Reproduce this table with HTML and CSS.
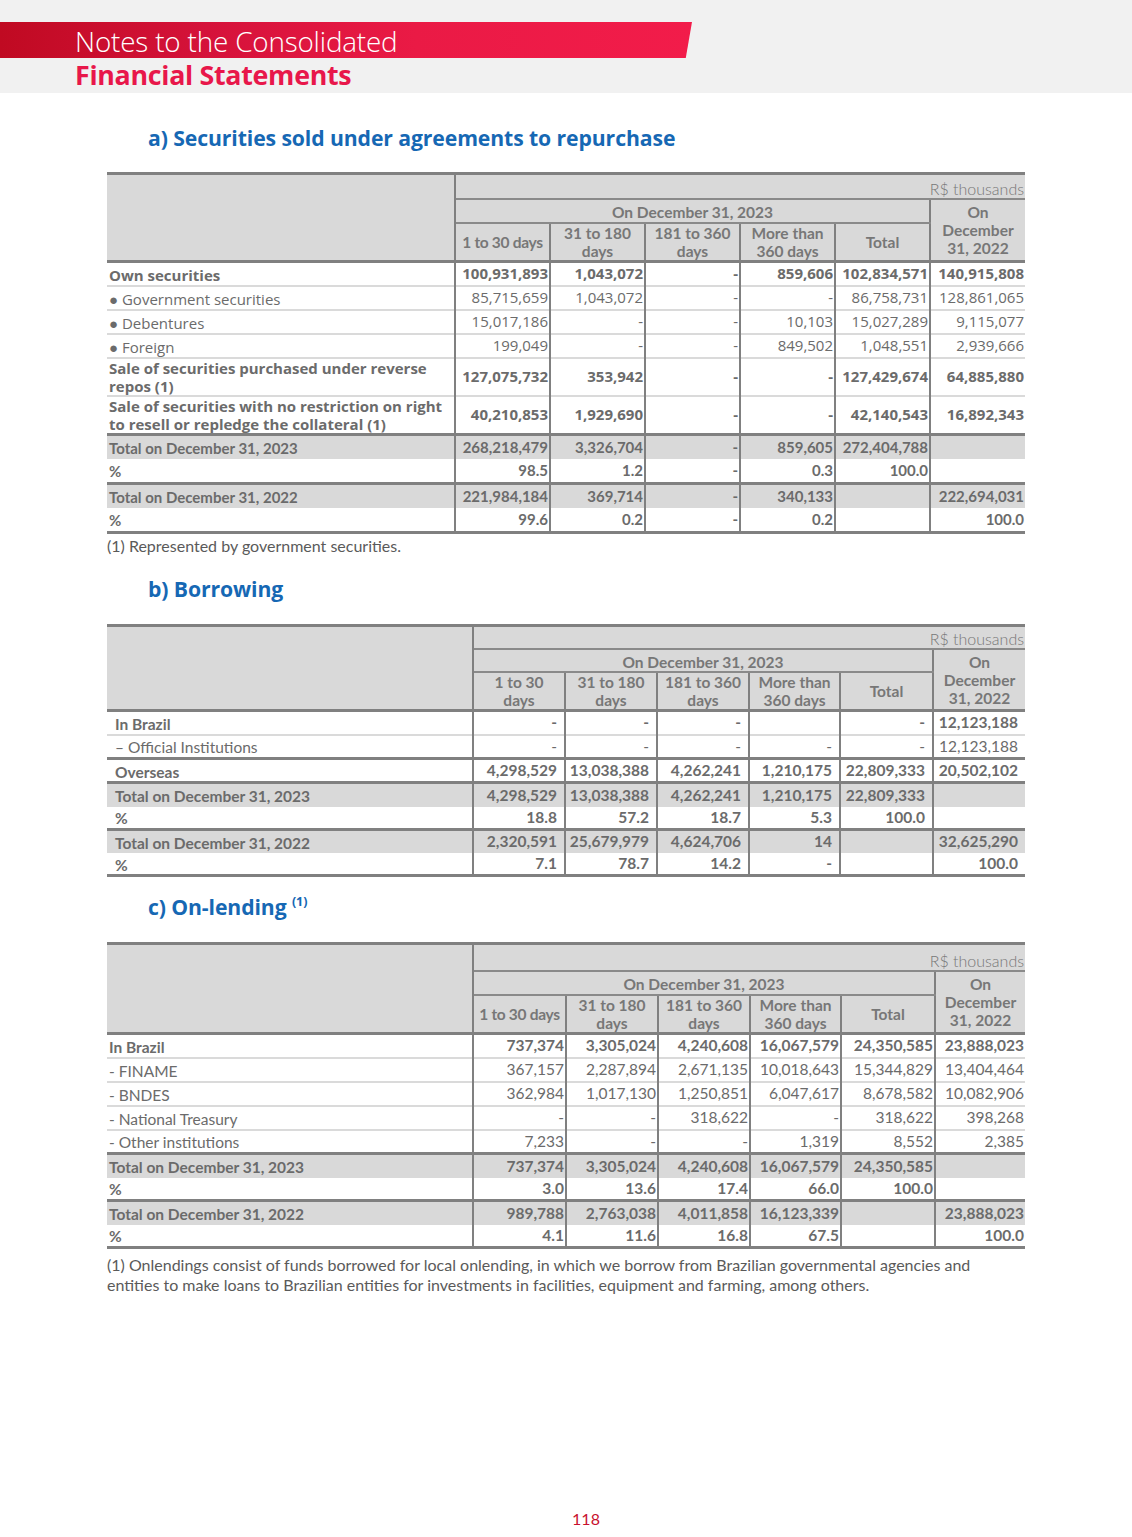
FILE: index.html
```html
<!DOCTYPE html>
<html lang="en">
<head>
<meta charset="utf-8">
<title>Notes to the Consolidated Financial Statements</title>
<link rel="stylesheet" href="styles.css">
</head>
<body>
<div class="page">
  <header class="top">
    <div class="bar"><span class="t1">Notes to the Consolidated</span></div>
    <div class="t2">Financial Statements</div>
  </header>

  <main class="content">
    <h2 class="sec sec-a">a) Securities sold under agreements to repurchase</h2>
    <table class="tbl ta">
      <colgroup><col class="w-label"><col class="w95"><col class="w95"><col class="w95"><col class="w95"><col class="w95"><col class="w95"></colgroup>
      <thead>
        <tr class="h1"><th class="blank" rowspan="3"></th><th class="unit" colspan="6">R$ thousands</th></tr>
        <tr class="h2"><th class="period" colspan="5">On December 31, 2023</th><th class="prev" rowspan="2">On<br>December<br>31, 2022</th></tr>
        <tr class="h3"><th class="tight">1 to 30 days</th><th>31 to 180<br>days</th><th>181 to 360<br>days</th><th>More than<br>360 days</th><th>Total</th></tr>
      </thead>
      <tbody>
        <tr class="b first"><td class="l">Own securities</td><td>100,931,893</td><td>1,043,072</td><td>-</td><td>859,606</td><td>102,834,571</td><td>140,915,808</td></tr>
        <tr><td class="l">● Government securities</td><td>85,715,659</td><td>1,043,072</td><td>-</td><td>-</td><td>86,758,731</td><td>128,861,065</td></tr>
        <tr><td class="l">● Debentures</td><td>15,017,186</td><td>-</td><td>-</td><td>10,103</td><td>15,027,289</td><td>9,115,077</td></tr>
        <tr><td class="l">● Foreign</td><td>199,049</td><td>-</td><td>-</td><td>849,502</td><td>1,048,551</td><td>2,939,666</td></tr>
        <tr class="b two"><td class="l">Sale of securities purchased under reverse repos (1)</td><td>127,075,732</td><td>353,942</td><td>-</td><td>-</td><td>127,429,674</td><td>64,885,880</td></tr>
        <tr class="b two"><td class="l">Sale of securities with no restriction on right to resell or repledge the collateral (1)</td><td>40,210,853</td><td>1,929,690</td><td>-</td><td>-</td><td>42,140,543</td><td>16,892,343</td></tr>
        <tr class="tot thick"><td class="l">Total on December 31, 2023</td><td>268,218,479</td><td>3,326,704</td><td>-</td><td>859,605</td><td>272,404,788</td><td></td></tr>
        <tr class="pct"><td class="l">%</td><td>98.5</td><td>1.2</td><td>-</td><td>0.3</td><td>100.0</td><td></td></tr>
        <tr class="tot thick"><td class="l">Total on December 31, 2022</td><td>221,984,184</td><td>369,714</td><td>-</td><td>340,133</td><td></td><td>222,694,031</td></tr>
        <tr class="pct last"><td class="l">%</td><td>99.6</td><td>0.2</td><td>-</td><td>0.2</td><td></td><td>100.0</td></tr>
      </tbody>
    </table>
    <p class="note">(1) Represented by government securities.</p>

    <h2 class="sec sec-b">b) Borrowing</h2>
    <table class="tbl tb">
      <colgroup><col class="w-label2"><col class="w92"><col class="w92"><col class="w92"><col class="w91"><col class="w93"><col class="w92"></colgroup>
      <thead>
        <tr class="h1"><th class="blank" rowspan="3"></th><th class="unit" colspan="6">R$ thousands</th></tr>
        <tr class="h2"><th class="period" colspan="5">On December 31, 2023</th><th class="prev" rowspan="2">On<br>December<br>31, 2022</th></tr>
        <tr class="h3"><th>1 to 30<br>days</th><th>31 to 180<br>days</th><th>181 to 360<br>days</th><th>More than<br>360 days</th><th>Total</th></tr>
      </thead>
      <tbody>
        <tr class="b first"><td class="l">In Brazil</td><td>-</td><td>-</td><td>-</td><td></td><td>-</td><td>12,123,188</td></tr>
        <tr><td class="l">– Official Institutions</td><td>-</td><td>-</td><td>-</td><td>-</td><td>-</td><td>12,123,188</td></tr>
        <tr class="b thick"><td class="l">Overseas</td><td>4,298,529</td><td>13,038,388</td><td>4,262,241</td><td>1,210,175</td><td>22,809,333</td><td>20,502,102</td></tr>
        <tr class="tot thick"><td class="l">Total on December 31, 2023</td><td>4,298,529</td><td>13,038,388</td><td>4,262,241</td><td>1,210,175</td><td>22,809,333</td><td></td></tr>
        <tr class="pct"><td class="l">%</td><td>18.8</td><td>57.2</td><td>18.7</td><td>5.3</td><td>100.0</td><td></td></tr>
        <tr class="tot thick"><td class="l">Total on December 31, 2022</td><td>2,320,591</td><td>25,679,979</td><td>4,624,706</td><td>14</td><td></td><td>32,625,290</td></tr>
        <tr class="pct last"><td class="l">%</td><td>7.1</td><td>78.7</td><td>14.2</td><td>-</td><td></td><td>100.0</td></tr>
      </tbody>
    </table>

    <h2 class="sec sec-c">c) On-lending <sup>(1)</sup></h2>
    <table class="tbl tc">
      <colgroup><col class="w-label2"><col class="w93"><col class="w92"><col class="w92"><col class="w91"><col class="w94"><col class="w90"></colgroup>
      <thead>
        <tr class="h1"><th class="blank" rowspan="3"></th><th class="unit" colspan="6">R$ thousands</th></tr>
        <tr class="h2"><th class="period" colspan="5">On December 31, 2023</th><th class="prev" rowspan="2">On<br>December<br>31, 2022</th></tr>
        <tr class="h3"><th class="tight">1 to 30 days</th><th>31 to 180<br>days</th><th>181 to 360<br>days</th><th>More than<br>360 days</th><th>Total</th></tr>
      </thead>
      <tbody>
        <tr class="b first"><td class="l">In Brazil</td><td>737,374</td><td>3,305,024</td><td>4,240,608</td><td>16,067,579</td><td>24,350,585</td><td>23,888,023</td></tr>
        <tr><td class="l">- FINAME</td><td>367,157</td><td>2,287,894</td><td>2,671,135</td><td>10,018,643</td><td>15,344,829</td><td>13,404,464</td></tr>
        <tr><td class="l">- BNDES</td><td>362,984</td><td>1,017,130</td><td>1,250,851</td><td>6,047,617</td><td>8,678,582</td><td>10,082,906</td></tr>
        <tr><td class="l">- National Treasury</td><td>-</td><td>-</td><td>318,622</td><td>-</td><td>318,622</td><td>398,268</td></tr>
        <tr><td class="l">- Other institutions</td><td>7,233</td><td>-</td><td>-</td><td>1,319</td><td>8,552</td><td>2,385</td></tr>
        <tr class="tot thick"><td class="l">Total on December 31, 2023</td><td>737,374</td><td>3,305,024</td><td>4,240,608</td><td>16,067,579</td><td>24,350,585</td><td></td></tr>
        <tr class="pct"><td class="l">%</td><td>3.0</td><td>13.6</td><td>17.4</td><td>66.0</td><td>100.0</td><td></td></tr>
        <tr class="tot thick"><td class="l">Total on December 31, 2022</td><td>989,788</td><td>2,763,038</td><td>4,011,858</td><td>16,123,339</td><td></td><td>23,888,023</td></tr>
        <tr class="pct last"><td class="l">%</td><td>4.1</td><td>11.6</td><td>16.8</td><td>67.5</td><td></td><td>100.0</td></tr>
      </tbody>
    </table>
    <p class="note note-c">(1) Onlendings consist of funds borrowed for local onlending, in which we borrow from Brazilian governmental agencies and entities to make loans to Brazilian entities for investments in facilities, equipment and farming, among others.</p>
  </main>

  <footer class="foot">118</footer>
</div>
</body>
</html>
```

FILE: styles.css
```css
* { box-sizing: border-box; }
html, body { margin: 0; padding: 0; background: #fff; }
body { font-family: "Lato", "Open Sans", sans-serif; color: #6b6b6b; }

.page {
  width: 1132px;
  min-height: 1537px;
  display: flex;
  flex-direction: column;
}

/* ---------- header ---------- */
.top {
  background: #f1f1f1;
  height: 93px;
  padding-top: 22px;
}
.bar {
  width: 692px;
  height: 36px;
  background: linear-gradient(90deg, #c00a22 0%, #d5123a 30%, #ea1a45 60%, #f21c4a 100%);
  clip-path: polygon(0 0, 100% 0, 99.1% 100%, 0 100%);
  padding-left: 75px;
  display: flex;
  align-items: center;
}
.t1 {
  font-family: "Open Sans", sans-serif;
  font-weight: 300;
  font-size: 27.8px;
  color: #fff;
  line-height: 28px;
  padding-top: 2px;
  letter-spacing: -0.15px;
}
.t2 {
  font-family: "Open Sans", sans-serif;
  font-weight: 700;
  font-size: 26.8px;
  color: #e8174a;
  padding-left: 75px;
  line-height: 28px;
  margin-top: 3px;
  letter-spacing: -0.3px;
}

/* ---------- content ---------- */
.content {
  padding-left: 107px;
  width: 1025px;
}
.sec {
  font-family: "Open Sans", sans-serif;
  font-weight: 700;
  font-size: 21.2px;
  color: #1668b4;
  margin: 0 0 0 41px;
  line-height: 24px;
  letter-spacing: -0.1px;
}
.sec sup { font-size: 12.5px; vertical-align: 9px; font-weight: 700; line-height: 0; }
.sec-a { margin-top: 33px; margin-bottom: 22px; }
.sec-b { margin-top: 21px; margin-bottom: 23px; }
.sec-c { margin-top: 18px; margin-bottom: 23px; }

.note {
  margin: 2px 0 0;
  font-size: 16px;
  line-height: 20px;
  color: #5a5a5a;
}

/* ---------- tables ---------- */
.tbl {
  width: 918px;
  table-layout: fixed;
  border-collapse: collapse;
  font-size: 15.5px;
  color: #6b6b6b;
}
.w-label { width: 348px; }
.w-label2 { width: 366px; }
.w95 { width: 95px; }
.w90 { width: 90px; }
.w91 { width: 91px; }
.w92 { width: 92px; }
.w93 { width: 93px; }
.w94 { width: 94px; }

.tbl thead th {
  background: #d9d9d9;
  font-weight: 700;
  color: #777;
  text-align: center;
  line-height: 18px;
  padding: 0 1px;
  font-size: 15.5px;
}
.tbl thead tr.h1 th { border-top: 3px solid #808080; height: 25px; }
.tbl th.blank { border-right: 2px solid #808080; border-bottom: 3px solid #808080; }
.tbl th.unit {
  text-align: right;
  font-weight: 300;
  font-size: 16px;
  padding: 3px 1px 0 0;
  border-bottom: 2px solid #8a8a8a;
  vertical-align: bottom;
}
.tbl tr.h2 th { height: 24px; }
.tbl th.period { border-bottom: 2px solid #8a8a8a; padding-top: 2px; }
.tbl th.prev { border-left: 2px solid #808080; border-bottom: 3px solid #808080; vertical-align: middle; }
.tbl tr.h3 th { border-left: 2px solid #808080; border-bottom: 3px solid #808080; height: 39px; }
.tbl tr.h3 th.tight { padding: 0; letter-spacing: -0.3px; }

.tbl tbody td {
  text-align: right;
  padding: 0 1px 0 2px;
  border-left: 2px solid #808080;
  border-top: 2px solid #dadada;
  height: 24px;
  line-height: 17px;
  vertical-align: middle;
  white-space: nowrap;
}
.tbl tbody td.l {
  text-align: left;
  border-left: none;
  white-space: normal;
  padding-top: 3px;
}
.tbl tbody tr.first td { border-top: 3px solid #808080; }
.tbl tbody tr.b td { font-weight: 700; }
.tbl tbody tr.two td { height: 38px; }
.tbl tbody tr.thick td { border-top: 3px solid #808080; }
.tbl tbody tr.tot td { background: #d9d9d9; font-weight: 700; height: 25px; }
.tbl tbody tr.pct td { border-top: none; font-weight: 700; height: 24px; }
.tbl tbody tr.last td { border-bottom: 3px solid #808080; }

/* table a: geometric face for upper rows */
.ta tbody td { font-family: "Open Sans", sans-serif; font-size: 15px; }
.ta tbody tr.tot td, .ta tbody tr.pct td { font-family: "Lato", sans-serif; font-size: 15px; }
.ta tbody tr.two td.l { line-height: 18px; padding-top: 0; }

/* table b */
.tb thead tr.h1 th { height: 24px; }
.tb tr.h2 th { height: 23px; }
.tb tr.h3 th { height: 38px; }
.tb tbody td { padding-right: 7px; height: 24px; }
.tb tbody tr.tot td { height: 24px; }
.tb tbody tr.pct td { height: 22.5px; }
.tb tbody td.l { padding-left: 8px; }

/* table c */
.tc thead tr.h1 th { height: 27px; }
.tc tbody td { height: 24px; }
.tc tbody tr.tot td { height: 24px; }
.tc tbody tr.pct td { height: 23px; }

.note-c { margin-top: 6px; line-height: 20px; }

/* ---------- footer ---------- */
.foot {
  margin-top: auto;
  text-align: center;
  font-size: 16px;
  color: #c8102e;
  padding: 0 0 8px 40px;
  line-height: 20px;
}
```
